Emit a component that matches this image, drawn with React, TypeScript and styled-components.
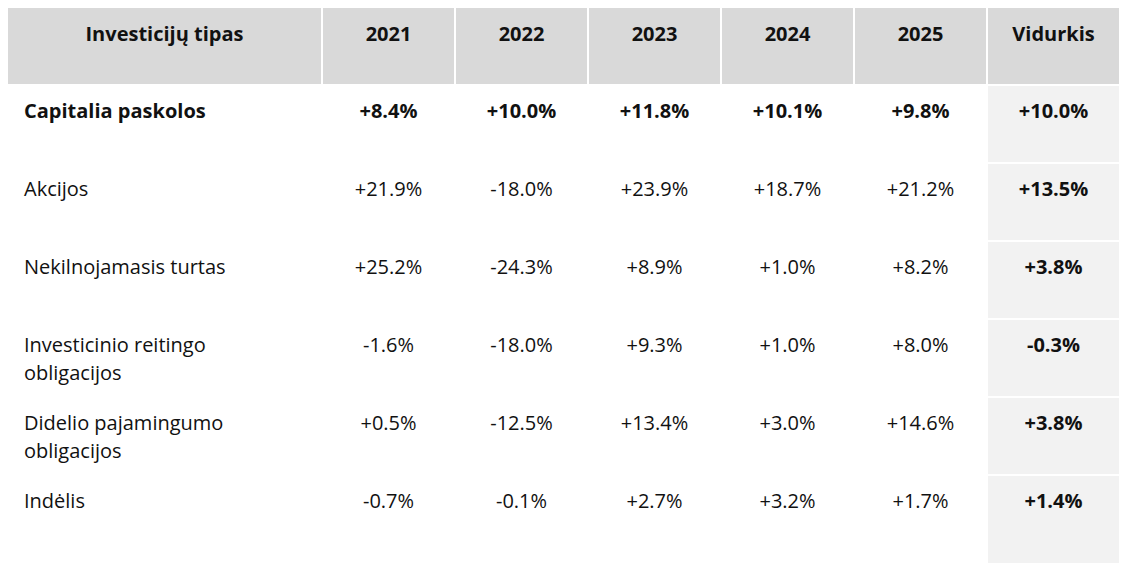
import React from 'react';
import styled, { createGlobalStyle } from 'styled-components';

const GlobalStyle = createGlobalStyle`
	body {
		margin: 8px;
		background: #fff;
		font-family: "Open Sans", "Noto Sans", sans-serif;
		color: #111;
	}
`;

const Table = styled.div`
	display: grid;
	grid-template-columns: 313px repeat(6, 1fr);
	gap: 2px;
	font-size: 20px;
	line-height: 28px;
`;

const HeadCell = styled.div`
	background: #d9d9d9;
	font-weight: 700;
	text-align: center;
	padding: 12px 10px 0;
	height: 76px;
	box-sizing: border-box;
`;

const Cell = styled.div<{ $first?: boolean; $bold?: boolean; $avg?: boolean; $tall?: boolean }>`
	box-sizing: border-box;
	min-height: ${(p) => (p.$tall ? '87px' : '76px')};
	padding: ${(p) => (p.$first ? '11px 40px 0 16px' : '11px 10px 0')};
	text-align: ${(p) => (p.$first ? 'left' : 'center')};
	font-weight: ${(p) => (p.$bold ? 700 : 400)};
	background: ${(p) => (p.$avg ? '#f2f2f2' : 'transparent')};
`;

type Row = { name: string; values: string[]; avg: string; bold?: boolean };

const years = ['2021', '2022', '2023', '2024', '2025'];

const rows: Row[] = [
	{ name: 'Capitalia paskolos', values: ['+8.4%', '+10.0%', '+11.8%', '+10.1%', '+9.8%'], avg: '+10.0%', bold: true },
	{ name: 'Akcijos', values: ['+21.9%', '-18.0%', '+23.9%', '+18.7%', '+21.2%'], avg: '+13.5%' },
	{ name: 'Nekilnojamasis turtas', values: ['+25.2%', '-24.3%', '+8.9%', '+1.0%', '+8.2%'], avg: '+3.8%' },
	{ name: 'Investicinio reitingo obligacijos', values: ['-1.6%', '-18.0%', '+9.3%', '+1.0%', '+8.0%'], avg: '-0.3%' },
	{ name: 'Didelio pajamingumo obligacijos', values: ['+0.5%', '-12.5%', '+13.4%', '+3.0%', '+14.6%'], avg: '+3.8%' },
	{ name: 'Indėlis', values: ['-0.7%', '-0.1%', '+2.7%', '+3.2%', '+1.7%'], avg: '+1.4%' },
];

const App: React.FC = () => (
	<>
		<GlobalStyle />
		<Table>
			<HeadCell>Investicijų tipas</HeadCell>
			{years.map((y) => (
				<HeadCell key={y}>{y}</HeadCell>
			))}
			<HeadCell>Vidurkis</HeadCell>

			{rows.map((r, i) => {
				const tall = i === rows.length - 1;
				return (
					<React.Fragment key={r.name}>
						<Cell $first $bold={r.bold} $tall={tall}>
							{r.name}
						</Cell>
						{r.values.map((v, j) => (
							<Cell key={j} $bold={r.bold} $tall={tall}>
								{v}
							</Cell>
						))}
						<Cell $avg $bold $tall={tall}>
							{r.avg}
						</Cell>
					</React.Fragment>
				);
			})}
		</Table>
	</>
);

export default App;
